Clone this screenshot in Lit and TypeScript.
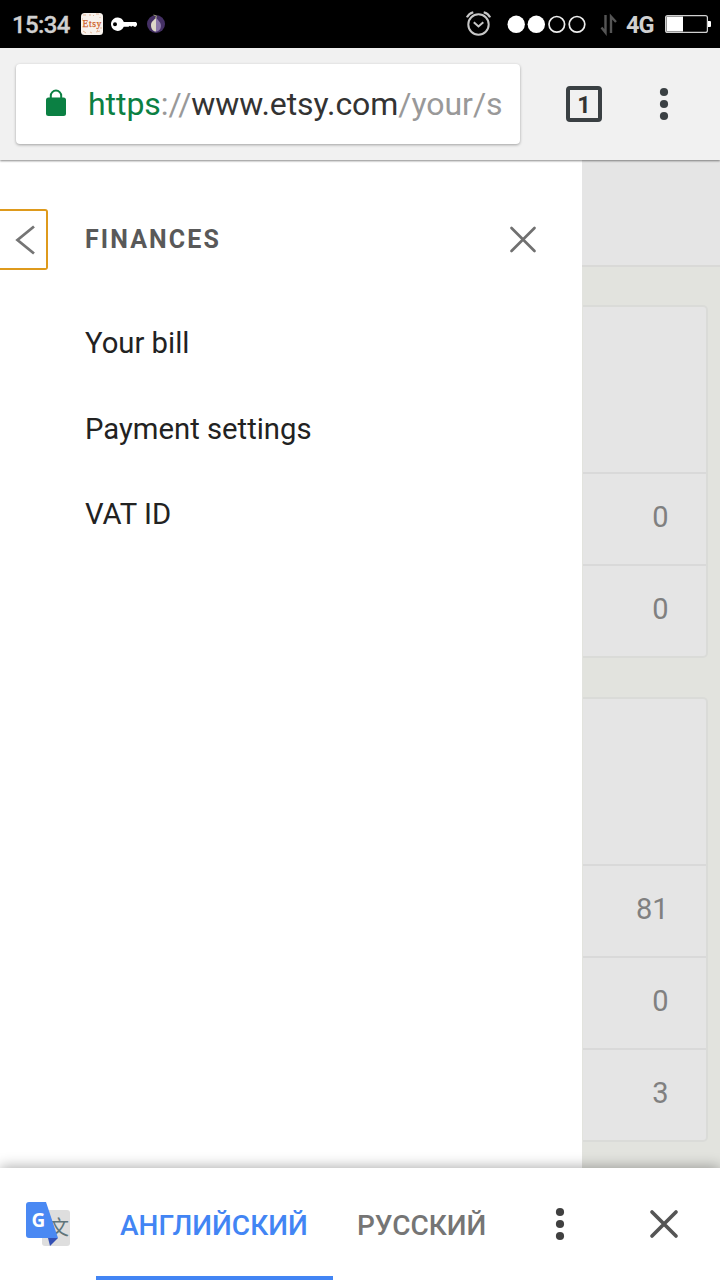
import { LitElement, html, css, svg } from "lit";
import { customElement, property } from "lit/decorators.js";

@customElement("status-bar")
class StatusBar extends LitElement {
  static styles = css`
    :host { display: flex; height: 48px; background: #000; color: #d0d0d0; font: 700 24px/48px Roboto, sans-serif; }
    .time { width: 68px; padding: 1px 0 0 12px; font-weight: 500; font-size: 24px; letter-spacing: -0.6px; -webkit-text-stroke: .3px #d0d0d0; }
    .left { width: 386px; height: 48px; flex: none; }
    .right { width: 160px; height: 48px; flex: none; }
    .net { width: 38px; padding-top: 1px; letter-spacing: -1px; font-weight: 700; font-size: 23.5px; }
    .battery { width: 56px; height: 48px; flex: none; }
    .etsy { font: 9.6px "Liberation Serif", serif; }
  `;
  render() {
    return html`
      <span class="time">15:34</span>
      <svg class="left" viewBox="80 0 386 48">
        <rect x="81" y="13" width="22" height="22" rx="3.5" fill="#f8f2ed" />
        <path d="M83 15h3m3 0h2m5-1h3m1 3v1M82 19h1m0 12 3 2m4-1 2 1m4-1 4-1m1-4v2M93 15l1 1M97 30l1 1" stroke="#e3b697" stroke-width="1" fill="none" />
        <text class="etsy" x="82.6" y="27" fill="#cf6228" stroke="#cf6228" stroke-width=".25" textLength="18.8">Etsy</text>
        <path fill="#fff" fill-rule="evenodd" d="M118 17.5a6.7 6.7 0 0 1 5.8 4.5H136l1 1.5v1.5l-1.2 1.8h-1.8l-1-1-2 1-1-1-1.5 1h-4.7a6.7 6.7 0 1 1-5.8-9.3Zm-3 4.7a2 2 0 1 0 0 4 2 2 0 0 0 0-4Z" />
        <circle cx="156" cy="24" r="9" fill="#443064" />
        <path d="M156 17c-1 3-5 4-5 8 0 4 2 6.5 5 6.5Z" fill="#ddd8c8" />
        <path d="M156 17c1 3 5 5 5 8.5 0 3.5-2 6-5 6Z" fill="#8b78a9" />
        <path d="m153.5 15 3 1-1 3" stroke="#9b9d77" fill="none" />
      </svg>
      <svg class="right" viewBox="466 0 160 48">
        <g fill="none" stroke="#c7c7c7">
          <circle cx="478.5" cy="24.5" r="10.2" stroke-width="2" />
          <path d="m473.8 22.2 4.7 4.3 4.8-4.3" stroke-width="2" />
          <path d="M466.9 17.4q1.8-4 6.4-5.2M490.1 17.4q-1.8-4-6.4-5.2" stroke-width="2.2" />
        </g>
        <circle cx="516.2" cy="24.3" r="8.7" fill="#fff" /><circle cx="536.3" cy="24.3" r="8.7" fill="#fff" />
        <circle cx="556.8" cy="24.3" r="7.8" fill="none" stroke="#eee" stroke-width="1.7" /><circle cx="577" cy="24.3" r="7.8" fill="none" stroke="#eee" stroke-width="1.7" />
        <path d="M605.5 15v17.5l-4-5M611 33V16.5l5 5.5" fill="none" stroke="#555" stroke-width="2.4" />
      </svg>
      <span class="net">4G</span>
      <svg class="battery" viewBox="664 0 56 48">
        <rect x="665.6" y="15.6" width="41.8" height="16.8" rx="2" fill="none" stroke="#d0d0d0" stroke-width="1.2" />
        <path d="M666.5 16.5H683v15h-16.5Z" fill="#fff" /><path d="M708 21h2q1 0 1 1v4q0 1-1 1h-2Z" fill="#fff" />
      </svg>`;
  }
}

const dots = (color: string) => html`<svg width="80" height="80" viewBox="0 0 80 80">
  ${[28, 40, 52].map((y) => svg`<circle cx="40" cy=${y} r="4.1" fill=${color} />`)}
</svg>`;

@customElement("browser-toolbar")
class BrowserToolbar extends LitElement {
  static styles = css`
    :host { display: flex; align-items: center; height: 112px; box-sizing: border-box; padding-left: 16px; background: #f1f1f1; font-family: Roboto, sans-serif; }
    .address { width: 504px; height: 80px; border-radius: 4px; background: #fff; box-shadow: 0 1px 3px #0005; display: flex; align-items: center; }
    .lock { width: 72px; height: 80px; flex: none; }
    .url { font-size: 32px; line-height: 40px; letter-spacing: -0.05px; white-space: nowrap; color: #999; }
    .scheme { color: #0b8043; }
    .host { color: #333; }
    .tabs { width: 36px; height: 36px; box-sizing: border-box; margin: 0 22px 0 46px; border: 4px solid #3a4043; border-radius: 4px; color: #333; font: 700 23.5px/30px Roboto, sans-serif; text-align: center; }
  `;
  render() {
    return html`
      <div class="address">
        <svg class="lock" viewBox="0 0 72 80">
          <rect x="30" y="33.5" width="20" height="18.5" rx="2.5" fill="#0b8043" />
          <path d="M34.8 35v-3.2a5.2 5.2 0 0 1 10.4 0V35" fill="none" stroke="#0b8043" stroke-width="2" />
        </svg>
        <span class="url"><span class="scheme">https</span>://<span class="host">www.etsy.com</span>/your/s</span>
      </div>
      <div class="tabs">1</div>
      ${dots("#3a4043")}`;
  }
}

@customElement("finance-drawer")
class FinanceDrawer extends LitElement {
  static styles = css`
    :host { display: block; width: 582px; background: #fff; font-family: Roboto, sans-serif; }
    .head { display: flex; align-items: center; height: 60px; padding-top: 49px; }
    .back { width: 48px; height: 61px; box-sizing: border-box; border: 2px solid #de9a1c; border-left: 0; border-radius: 0 3px 3px 0; }
    .title { width: 423.5px; margin: 0 0 0 37px; padding-top: 2px; font-size: 25px; line-height: 30px; font-weight: 700; letter-spacing: 2.1px; color: #595959; }
    .menu { margin: 32px 0 0; padding: 0 0 0 85px; list-style: none; font-size: 29.25px; line-height: 85.5px; color: #222; }
  `;
  render() {
    return html`
      <div class="head">
        <svg class="back" viewBox="0 0 46 57"><path d="m34 15.5-16.5 13.5L34 42.5" fill="none" stroke="#757575" stroke-width="2.8" /></svg>
        <h1 class="title">FINANCES</h1>
        <svg width="28" height="28" viewBox="0 0 28 28"><path d="m2.5 3 23 23m0-23-23 23" fill="none" stroke="#707070" stroke-width="2.7" stroke-linecap="round" /></svg>
      </div>
      <ul class="menu">
        ${["Your bill", "Payment settings", "VAT ID"].map((t) => html`<li>${t}</li>`)}
      </ul>`;
  }
}

@customElement("stats-card")
class StatsCard extends LitElement {
  @property({ attribute: false }) values: number[] = [];
  static styles = css`
    :host { display: block; box-sizing: border-box; margin: 0 12px 0 1px; border: 2px solid #dadbd8; border-left: 0; border-radius: 0 5px 5px 0; background: #e5e5e5; font: 29px/90px Roboto, sans-serif; color: #808080; text-align: right; }
    .blank { height: 165px; }
    .row { height: 90px; border-top: 2px solid #d9d9d9; padding-right: 37.5px; line-height: 86px; }
    .row:last-child { height: 89px; }
  `;
  render() {
    return html`<div class="blank"></div>${this.values.map((v) => html`<div class="row">${v}</div>`)}`;
  }
}

@customElement("translate-bar")
class TranslateBar extends LitElement {
  static styles = css`
    :host { display: flex; align-items: center; height: 112px; background: #fff; font-family: Roboto, sans-serif; box-shadow: 0 -1px 13px #0005; }
    .logo { width: 96px; height: 112px; flex: none; }
    .tab { box-sizing: border-box; height: 112px; padding: 4px 0 0 24px; font-size: 28px; font-weight: 500; line-height: 108px; white-space: nowrap; color: #757575; }
    .active { width: 237px; color: #4285f4; border-bottom: 4px solid #4285f4; }
    .other { width: 187px; }
    .close { margin-left: 24px; }
    .g { font: 700 19px "Open Sans", sans-serif; }
    .han { font: 20px "Noto Sans CJK SC", sans-serif; }
  `;
  render() {
    return html`
      <svg class="logo" viewBox="0 0 96 112">
        <rect x="42" y="42" width="28" height="36" rx="3" fill="#dedede" />
        <text class="han" x="49" y="67" fill="#607579">文</text>
        <path d="M48 70h10l-8 8Z" fill="#3450b4" />
        <path d="M29 34h17l12 36H29q-3 0-3-3V37q0-3 3-3Z" fill="#4a89f3" />
        <text class="g" x="31.5" y="59" fill="#fff">G</text>
      </svg>
      <span class="tab active">АНГЛИЙСКИЙ</span>
      <span class="tab other">РУССКИЙ</span>
      ${dots("#404040")}
      <svg class="close" width="80" height="80" viewBox="0 0 80 80"><path d="m28 28 24 24m0-24-24 24" fill="none" stroke="#555" stroke-width="3.7" stroke-linecap="round" /></svg>`;
  }
}

@customElement("app-root")
class AppRoot extends LitElement {
  static styles = css`
    :host { display: grid; grid-template-rows: 48px 112px 1008px 112px; width: 720px; height: 1280px; overflow: hidden; }
    .content { display: grid; grid-template-columns: 582px 138px; }
    browser-toolbar { box-shadow: 0 1px 2px #0007; z-index: 1; }
    .page { background: #e2e3de; }
    .banner { height: 107px; box-sizing: border-box; background: #e5e5e5; border-bottom: 2px solid #d9d9d7; margin-bottom: 38px; }
    .first { height: 353px; margin-bottom: 39px; }
    .second { height: 445px; }
    translate-bar { z-index: 1; }
  `;
  render() {
    return html`
      <status-bar></status-bar>
      <browser-toolbar></browser-toolbar>
      <main class="content">
        <finance-drawer></finance-drawer>
        <div class="page">
          <div class="banner"></div>
          <stats-card class="first" .values=${[0, 0]}></stats-card>
          <stats-card class="second" .values=${[81, 0, 3]}></stats-card>
        </div>
      </main>
      <translate-bar></translate-bar>`;
  }
}
